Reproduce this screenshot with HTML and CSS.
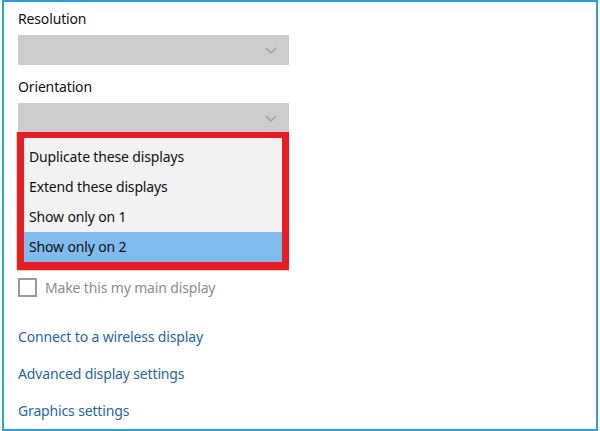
FILE: index.html
```html
<!DOCTYPE html>
<html lang="en">
<head>
  <meta charset="UTF-8">
  <title>Display settings</title>
  <link rel="stylesheet" href="styles.css">
</head>
<body>

  <div class="frame">

    <!-- Resolution -->
    <div class="label">Resolution</div>
    <div class="combo">
      <svg class="chevron" width="12" height="7" viewBox="0 0 12 7"><path d="M1 1 L6 6 L11 1" fill="none" stroke="#9a9a9a" stroke-width="1.2"/></svg>
    </div>

    <!-- Orientation -->
    <div class="label">Orientation</div>
    <div class="combo open">
      <svg class="chevron" width="12" height="7" viewBox="0 0 12 7"><path d="M1 1 L6 6 L11 1" fill="none" stroke="#9a9a9a" stroke-width="1.2"/></svg>
    </div>

    <!-- open dropdown -->
    <div class="dropdown">
      <div class="item">Duplicate these displays</div>
      <div class="item">Extend these displays</div>
      <div class="item">Show only on 1</div>
      <div class="item selected">Show only on 2</div>
    </div>

    <div class="check">
      <span class="box"></span>
      <span>Make this my main display</span>
    </div>

    <div class="links">
      <a href="#">Connect to a wireless display</a>
      <a href="#">Advanced display settings</a>
      <a href="#">Graphics settings</a>
    </div>

  </div>

</body>
</html>
```

FILE: styles.css
```css
body {
  margin: 0;
  background-color: #fff;
  font-family: 'Noto Sans', 'Open Sans', sans-serif;
  font-size: 14px;
  letter-spacing: -0.15px;
  color: #111;
}
.frame {
  box-sizing: border-box;
  margin-left: 2px;
  width: 596px;
  height: 431px;
  border: 2px solid #29a2d6;
  padding: 7px 14px 0 14px;
  overflow: hidden;
}
.label {
  line-height: 20px;
  height: 20px;
}
.combo {
  width: 271px;
  height: 30px;
  margin-top: 6px;
  margin-bottom: 12px;
  background-color: #cccccc;
  display: flex;
  justify-content: flex-end;
  align-items: center;
  padding-right: 12px;
  box-sizing: border-box;
}
.combo.open {
  margin-bottom: 0;
}
.dropdown {
  box-sizing: border-box;
  width: 272px;
  margin-left: -1px;
  margin-top: -1px;
  border: 7px solid #e81c24;
  border-top-width: 6px;
  border-bottom-width: 8px;
  padding-top: 4px;
  background-color: #f2f2f2;
  box-shadow: 0 1px 0 #bfe3a8, -1px 0 0 #bfe3a8;
}
.item {
  height: 30px;
  line-height: 30px;
  padding-left: 5px;
}
.item.selected {
  background-color: #7fbbec;
}
.check {
  display: flex;
  align-items: center;
  gap: 8px;
  margin-top: 8px;
  color: #8c8c8c;
}
.box {
  box-sizing: border-box;
  width: 19px;
  height: 19px;
  border: 2px solid #999;
}
.links {
  display: flex;
  flex-direction: column;
  gap: 17px;
  margin-top: 30px;
}
.links a {
  color: #1f66a0;
  text-decoration: none;
  line-height: 20px;
}
```
